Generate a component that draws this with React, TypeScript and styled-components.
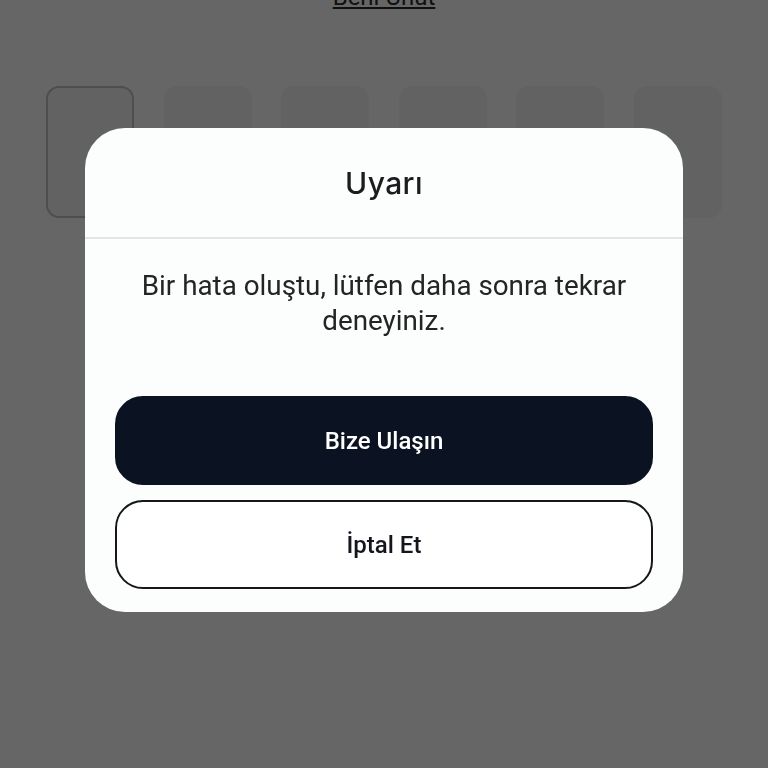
import React from "react";
import styled, { createGlobalStyle } from "styled-components";

const GlobalStyle = createGlobalStyle`
  html, body {
    margin: 0;
    padding: 0;
    background: #ffffff;
    font-family: Roboto, "Liberation Sans", sans-serif;
  }
  * { box-sizing: border-box; }
`;

const Screen = styled.div`
  width: 768px;
  height: 768px;
  overflow: hidden;
  display: flex;
  flex-direction: column;
  align-items: center;
  background: #ffffff;
`;

const ForgetLink = styled.a`
  margin-top: -17px;
  font-family: Roboto, "Liberation Sans", sans-serif;
  font-size: 24px;
  line-height: 28px;
  color: #2a2a2a;
  text-decoration: underline;
`;

const CodeRow = styled.div`
  margin-top: 75px;
  display: flex;
  gap: 29.6px;
`;

const CodeCell = styled.div<{ $active?: boolean }>`
  width: 88px;
  height: 132px;
  border-radius: 13px;
  background: #f4f5f6;
  border: 2px solid ${(p) => (p.$active ? "#c2c2c2" : "#f4f5f6")};
`;

const Overlay = styled.div`
  position: fixed;
  inset: 0;
  background: rgba(0, 0, 0, 0.6);
  display: flex;
  justify-content: center;
  align-items: flex-start;
  padding-top: 128px;
`;

const Dialog = styled.div`
  width: 598px;
  background: #fcfdfd;
  border-radius: 40px;
  overflow: hidden;
  display: flex;
  flex-direction: column;
`;

const Header = styled.div`
  height: 111px;
  display: flex;
  align-items: center;
  justify-content: center;
  border-bottom: 2px solid #e4e5e6;
`;

const Title = styled.h2`
  margin: 0;
  font-family: Inter, "Open Sans", sans-serif;
  font-weight: 500;
  font-size: 30px;
  letter-spacing: 0.4px;
  color: #1b1c1e;
`;

const Body = styled.div`
  padding: 29px 30px 23px;
  display: flex;
  flex-direction: column;
`;

const Message = styled.p`
  margin: 0 0 58px;
  text-align: center;
  font-size: 27.8px;
  line-height: 35px;
  color: #222426;
`;

const Actions = styled.div`
  display: flex;
  flex-direction: column;
  gap: 15px;
`;

const ActionButton = styled.button<{ $primary?: boolean }>`
  height: 89px;
  border-radius: 28px;
  font-family: Roboto, "Liberation Sans", sans-serif;
  font-weight: 500;
  font-size: 24px;
  cursor: pointer;
  background: ${(p) => (p.$primary ? "#0b1322" : "#ffffff")};
  color: ${(p) => (p.$primary ? "#ffffff" : "#13161c")};
  border: 2px solid ${(p) => (p.$primary ? "#0b1322" : "#15171b")};
`;

export default function App() {
  return (
    <>
      <GlobalStyle />
      <Screen>
        <ForgetLink>Beni Unut</ForgetLink>
        <CodeRow>
          <CodeCell $active />
          <CodeCell />
          <CodeCell />
          <CodeCell />
          <CodeCell />
          <CodeCell />
        </CodeRow>
      </Screen>
      <Overlay>
        <Dialog>
          <Header>
            <Title>Uyarı</Title>
          </Header>
          <Body>
            <Message>
              Bir hata oluştu, lütfen daha sonra tekrar deneyiniz.
            </Message>
            <Actions>
              <ActionButton $primary>Bize Ulaşın</ActionButton>
              <ActionButton>İptal Et</ActionButton>
            </Actions>
          </Body>
        </Dialog>
      </Overlay>
    </>
  );
}
